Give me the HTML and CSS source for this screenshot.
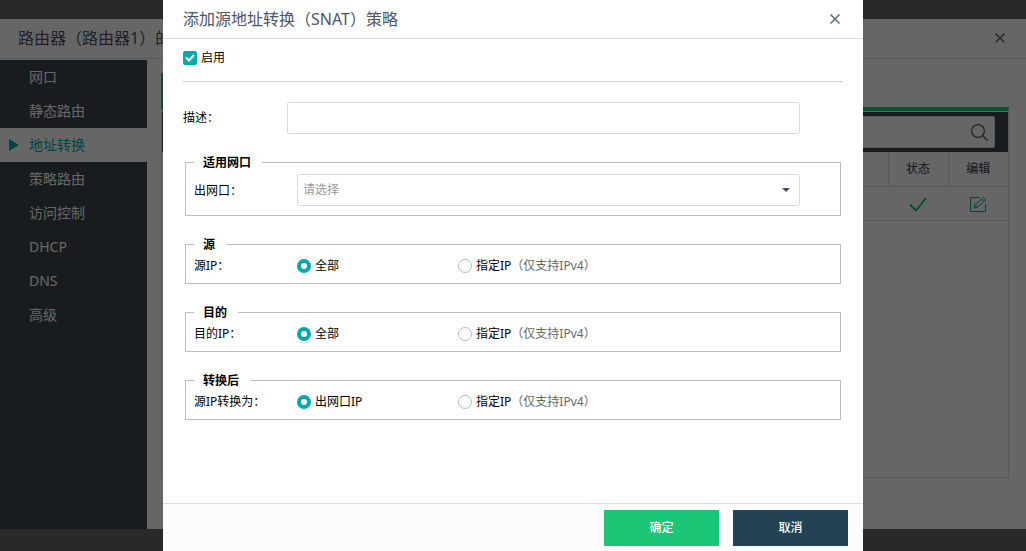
FILE: index.html
```html
<!DOCTYPE html>
<html lang="zh-CN">
<head>
<meta charset="utf-8">
<title>添加源地址转换（SNAT）策略</title>
<link rel="stylesheet" href="styles.css">
</head>
<body>
<div class="page">
  <header class="page-head">
    <h1 class="title">路由器（路由器1）的</h1>
    <button class="close" type="button" aria-label="关闭"><svg width="10" height="10" viewBox="0 0 10 10"><path d="M.5.5l9 9M9.500.5l-9 9"/></svg></button>
  </header>
  <div class="page-body">
    <nav class="sidebar">
      <a class="nav-item" href="#">网口</a>
      <a class="nav-item" href="#">静态路由</a>
      <a class="nav-item active" href="#"><svg class="arrow" width="10" height="12" viewBox="0 0 10 12"><path d="M0 0l10 6-10 6z"/></svg>地址转换</a>
      <a class="nav-item" href="#">策略路由</a>
      <a class="nav-item" href="#">访问控制</a>
      <a class="nav-item" href="#">DHCP</a>
      <a class="nav-item" href="#">DNS</a>
      <a class="nav-item" href="#">高级</a>
    </nav>
    <main class="content">
      <div class="tab"></div>
      <div class="panel">
        <div class="toolbar">
          <div class="search">
            <input class="search-input" type="text" aria-label="搜索">
            <svg class="search-icon" width="17" height="17" viewBox="0 0 17 17"><circle cx="7" cy="7" r="6.400"/><path d="M11.500 11.500l5 5"/></svg>
          </div>
        </div>
        <table class="list">
          <thead>
            <tr><th></th><th class="narrow">状态</th><th class="narrow">编辑</th></tr>
          </thead>
          <tbody>
            <tr>
              <td></td>
              <td><svg class="check" width="18" height="15" viewBox="0 0 18 15"><path d="M1 7.500l6 6L17 1"/></svg></td>
              <td><svg class="edit" width="17" height="15" viewBox="0 0 17 15"><path d="M9.500.5H.5v14h15V7M4 11l1-3.500L13.500.8l2.300 2.200L7.500 10zM5 7.500L7.500 10M12 2.500l2 2"/></svg></td>
            </tr>
          </tbody>
        </table>
      </div>
    </main>
  </div>
</div>

<div class="overlay">
  <form class="modal" role="dialog" aria-labelledby="modal-title">
    <header class="modal-head">
      <h2 class="title" id="modal-title">添加源地址转换（SNAT）策略</h2>
      <button class="close" type="button" aria-label="关闭"><svg width="10" height="10" viewBox="0 0 10 10"><path d="M.5.5l9 9M9.500.5l-9 9"/></svg></button>
    </header>
    <div class="modal-body">
      <div class="enable">
        <label class="option"><input class="checkbox" type="checkbox" checked>启用</label>
      </div>
      <div class="field">
        <label class="field-label" for="desc">描述：</label>
        <input class="text-box" id="desc" type="text">
      </div>
      <fieldset class="group">
        <legend>适用网口</legend>
        <div class="field">
          <label class="field-label" for="port">出网口：</label>
          <select class="text-box select" id="port"><option>请选择</option></select>
        </div>
      </fieldset>
      <fieldset class="group">
        <legend>源</legend>
        <div class="field">
          <span class="field-label">源IP：</span>
          <label class="option first"><input class="radio" type="radio" name="src" checked>全部</label>
          <label class="option"><input class="radio" type="radio" name="src">指定IP<span class="hint">（仅支持IPv4）</span></label>
        </div>
      </fieldset>
      <fieldset class="group">
        <legend>目的</legend>
        <div class="field">
          <span class="field-label">目的IP：</span>
          <label class="option first"><input class="radio" type="radio" name="dst" checked>全部</label>
          <label class="option"><input class="radio" type="radio" name="dst">指定IP<span class="hint">（仅支持IPv4）</span></label>
        </div>
      </fieldset>
      <fieldset class="group">
        <legend>转换后</legend>
        <div class="field">
          <span class="field-label">源IP转换为：</span>
          <label class="option first"><input class="radio" type="radio" name="nat" checked>出网口IP</label>
          <label class="option"><input class="radio" type="radio" name="nat">指定IP<span class="hint">（仅支持IPv4）</span></label>
        </div>
      </fieldset>
    </div>
    <footer class="modal-foot">
      <button class="btn ok" type="button">确定</button>
      <button class="btn cancel" type="button">取消</button>
    </footer>
  </form>
</div>
</body>
</html>
```
FILE: styles.css
```css
* { box-sizing: border-box; }

body {
  margin: 0;
  min-height: 100vh;
  display: flex;
  background: #666;
  color: #000;
  font: 12px/20px "Noto Sans", "Noto Sans CJK SC", sans-serif;
}

button, input, select { font: inherit; }

svg { display: block; fill: none; }

/* Page behind the dialog */
.page {
  flex: 1;
  display: flex;
  flex-direction: column;
  margin: 19px 0 22px;
  background: #fff;
}

.page-head, .modal-head {
  display: flex;
  align-items: center;
  justify-content: space-between;
  border-bottom: 1px solid #ddd;
}

.page-head { height: 40px; padding: 0 18px 1px; }

.title {
  margin: 0;
  font-size: 16px;
  line-height: 24px;
  font-weight: 400;
  color: #4e5566;
}

.close {
  display: flex;
  padding: 3px;
  border: 0;
  background: none;
}

.close svg { stroke: #5f677d; stroke-width: 1.5; }

.page-body { flex: 1; display: flex; padding-top: 1px; }

.sidebar { width: 147px; background: #3c464d; }

.nav-item {
  display: flex;
  align-items: center;
  height: 34px;
  padding-left: 29px;
  font-size: 14px;
  color: #fff;
  text-decoration: none;
}

.nav-item.active {
  gap: 10px;
  padding-left: 9px;
  background: #fff;
  color: #00a9ab;
}

.arrow { fill: #00a9ab; }

.content {
  flex: 1;
  display: flex;
  flex-direction: column;
  padding: 13px 17px 51px 14px;
}

.tab { width: 110px; height: 34px; background: #1cc677; }

.panel {
  flex: 1;
  border: 1px solid #ddd;
  border-top: 4px solid #1cc677;
}

.toolbar {
  display: flex;
  justify-content: flex-end;
  margin-top: 1px;
  padding: 4px 13px 4px 0;
  background: #3c464d;
}

.search {
  display: flex;
  align-items: center;
  width: 260px;
  height: 32px;
  padding-right: 6px;
  border: 1px solid #ddd;
  border-radius: 2px;
  background: #fff;
}

.search-input { flex: 1; min-width: 0; border: 0; background: none; }

.search-icon { stroke: #4e5566; stroke-width: 1.2; }

.list { width: 100%; border-collapse: collapse; table-layout: fixed; }

.list tr { height: 34px; border-bottom: 1px solid #ddd; }

.list th, .list td { padding: 0; text-align: center; }

.list th { font-weight: 400; color: #33364d; border-left: 1px solid #ddd; }

.list th:first-child { border-left: 0; }

.list .narrow { width: 60px; }

.list svg { margin: 2px auto 0; }

.check { stroke: #1cc677; stroke-width: 2; }

.edit { stroke: #00a9ab; stroke-width: 1; }

/* Dialog */
.overlay {
  position: fixed;
  inset: 0;
  display: flex;
  justify-content: center;
  background: rgba(0, 0, 0, 0.6);
}

.modal {
  display: flex;
  flex-direction: column;
  width: 700px;
  max-width: 100%;
  background: #fff;
}

.modal-head { height: 39px; padding: 0 20px 1px; }

.modal-body {
  flex: 1;
  display: flex;
  flex-direction: column;
  gap: 20px;
  padding: 0 20px;
}

.enable {
  padding: 9px 0 13px;
  border-bottom: 1px solid #ccc;
}

.option { display: flex; align-items: center; gap: 4px; }

.option.first { width: 161px; }

.checkbox, .radio {
  appearance: none;
  flex: none;
  width: 14px;
  height: 14px;
  margin: 0;
  background: #fff;
}

.checkbox { border-radius: 2px; }

.checkbox:checked {
  background: #00a9ab url("data:image/svg+xml,%3Csvg xmlns='http://www.w3.org/2000/svg' viewBox='0 0 14 14'%3E%3Cpath d='M3 6.500l3 3L11 4' fill='none' stroke='white' stroke-width='2.200'/%3E%3C/svg%3E");
}

.radio { border: 1px solid #bbb; border-radius: 50%; }

.radio:checked { border: 4px solid #00a9ab; }

.field { display: flex; align-items: center; }

.field-label { width: 104px; }

.text-box {
  flex: 1;
  min-width: 0;
  height: 32px;
  margin-right: 43px;
  padding: 0 5px;
  border: 1px solid #d9d9d9;
  border-radius: 2px;
  background: #fff;
}

.group {
  margin: 0 2px;
  min-width: 0;
  padding: 3px 0 7px 8px;
  border: 1px solid #bbb;
}

.group .text-box { margin: 0 40px 2px 0; }

.group .field-label { width: 103px; }

.group legend {
  padding: 0 9px;
  border-right: 2px solid #fff;
  font-weight: 700;
  line-height: 17px;
}

.select {
  appearance: none;
  color: #999;
  background: #fff url("data:image/svg+xml,%3Csvg xmlns='http://www.w3.org/2000/svg' width='8' height='4' viewBox='0 0 8 4'%3E%3Cpath d='M0 0h8L4 4z' fill='%23434a5e'/%3E%3C/svg%3E") no-repeat right 9px center;
}

.hint { margin-left: -4px; color: #666; }

.modal-foot {
  display: flex;
  justify-content: flex-end;
  gap: 14px;
  padding: 6px 15px 5px;
  border-top: 1px solid #ddd;
  background: #fcfcfc;
}

.btn {
  width: 115px;
  height: 36px;
  border: 0;
  color: #fff;
  font-weight: 500;
}

.ok { background: #1cc677; }

.cancel { background: #234055; }
```
